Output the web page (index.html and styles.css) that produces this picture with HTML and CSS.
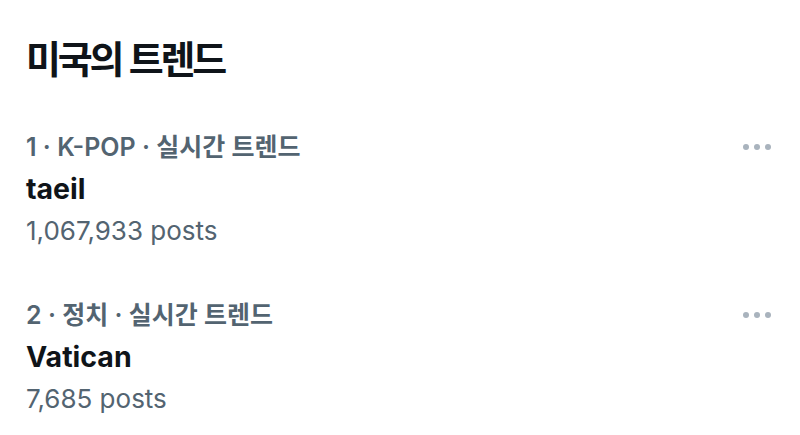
FILE: index.html
```html
<!DOCTYPE html>
<html lang="ko">
<head>
<meta charset="utf-8">
<link rel="stylesheet" href="styles.css">
</head>
<body>
<main class="panel">
  <h1 class="title">미국의 트렌드</h1>
  <ul class="trends">
    <li class="trend">
      <div class="info">
        <div class="meta">1 · K-POP · 실시간 트렌드</div>
        <div class="name">taeil</div>
        <div class="count">1,067,933 posts</div>
      </div>
      <div class="more"><span></span><span></span><span></span></div>
    </li>
    <li class="trend">
      <div class="info">
        <div class="meta">2 · 정치 · 실시간 트렌드</div>
        <div class="name">Vatican</div>
        <div class="count">7,685 posts</div>
      </div>
      <div class="more"><span></span><span></span><span></span></div>
    </li>
  </ul>
</main>
</body>
</html>
```
FILE: styles.css
```css
html, body {
  margin: 0;
  padding: 0;
  background: #ffffff;
}
body {
  width: 800px;
  height: 435px;
  overflow: hidden;
  font-family: Inter, "Noto Sans CJK KR", sans-serif;
}
.panel {
  padding: 32px 29px 0 26px;
}
.title {
  margin: 0;
  font-family: "Noto Sans CJK KR", sans-serif;
  font-size: 38px;
  font-weight: 700;
  line-height: 50px;
  letter-spacing: -3.2px;
  color: #0f1419;
}
.trends {
  list-style: none;
  margin: 44px 0 0;
  padding: 0;
  display: flex;
  flex-direction: column;
  gap: 42px;
}
.trend {
  display: flex;
  justify-content: space-between;
  align-items: flex-start;
}
.info {
  display: flex;
  flex-direction: column;
}
.meta {
  font-size: 25px;
  font-weight: 600;
  line-height: 42px;
  color: #536471;
  letter-spacing: 0;
}
.name {
  font-size: 28.5px;
  font-weight: 700;
  line-height: 42px;
  color: #0f1419;
}
.count {
  font-size: 26px;
  font-weight: 400;
  line-height: 42px;
  color: #536471;
}
.more {
  display: flex;
  gap: 5px;
  height: 42px;
  align-items: center;
}
.more span {
  width: 6px;
  height: 6px;
  border-radius: 50%;
  background: #a9b3bd;
}
```
